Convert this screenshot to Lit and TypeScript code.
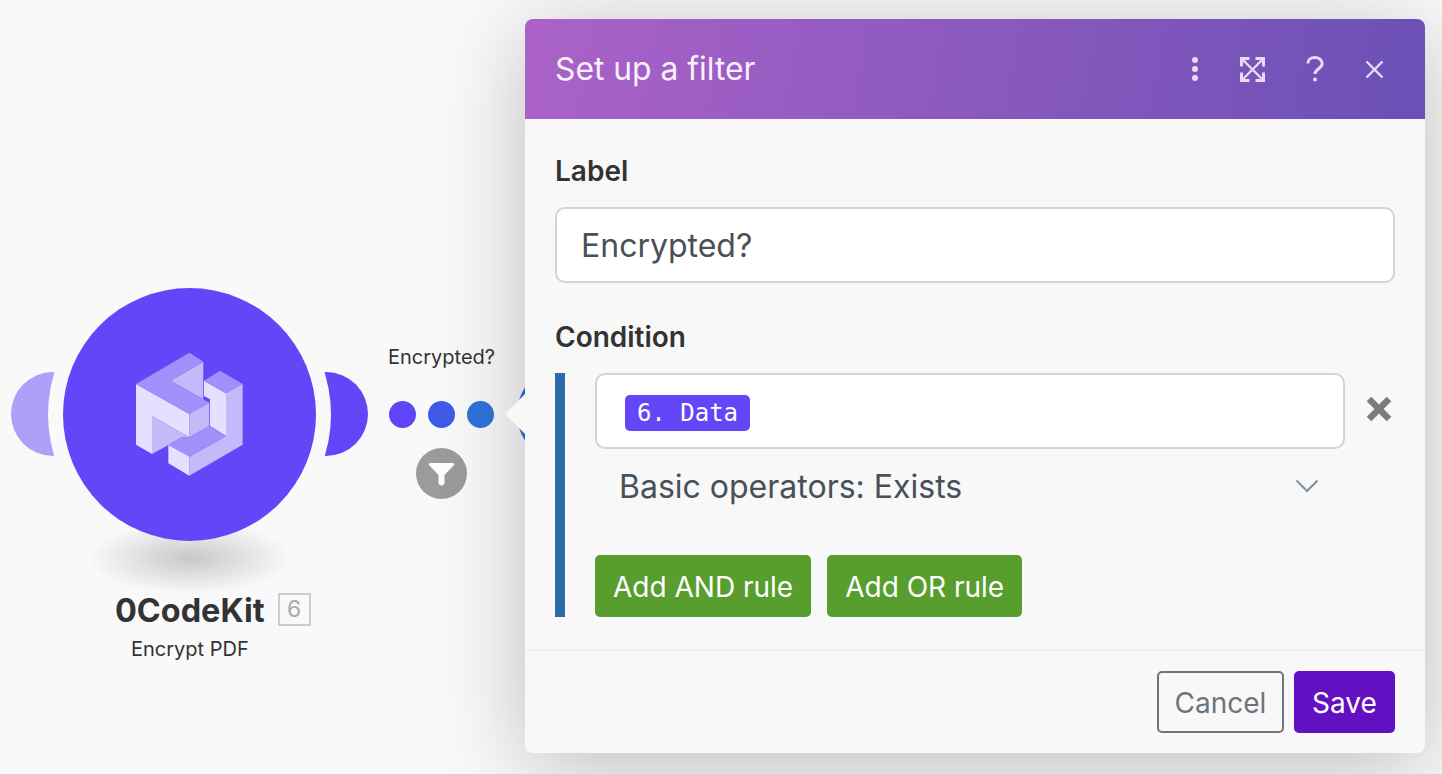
import { LitElement, html, css, svg } from "lit";
import { customElement } from "lit/decorators.js";

const logo = svg`
  <polygon fill="#e4e0ff" points="48,132 208,222 208,292 96,228 96,342 48,314" />
  <polygon fill="#c3baf9" points="96,228 208,292 185,292 145,315 96,342" />
  <polygon fill="#c3baf9" points="152,122 250,65 250,178" />
  <polygon fill="#a091fa" points="48,132 208,38 250,65 152,122 268,188 208,222" />
  <polygon fill="#c3baf9" points="208,222 268,188 268,258 208,292" />
  <polygon fill="#e4e0ff" points="252,122 318,160 318,288 270,258 270,178 252,168" />
  <polygon fill="#a091fa" points="252,122 300,92 368,132 318,160" />
  <polygon fill="#c3baf9" points="318,160 368,132 368,314 208,407 208,350 318,288" />
  <polygon fill="#a091fa" points="145,315 185,292 208,292 268,258 318,288 208,350" />
  <polygon fill="#e4e0ff" points="145,315 208,350 208,407 145,370" />
`;

@customElement("app-root")
export class AppRoot extends LitElement {
  static styles = css`
    :host {
      display: block;
      position: relative;
      width: 1442px;
      height: 774px;
      overflow: hidden;
      background: #f9f9f9;
      font-family: Inter, "Liberation Sans", sans-serif;
      color: #333;
    }

    /* scenario canvas */
    .port {
      position: absolute;
      top: 372px;
      width: 84px;
      height: 84px;
      border-radius: 50%;
    }
    .port.left {
      left: 11px;
      background: #ae9ff8;
    }
    .port.right {
      left: 284px;
      background: #6246f8;
    }
    .ring {
      position: absolute;
      left: 48px;
      top: 273px;
      width: 283px;
      height: 283px;
      border-radius: 50%;
      background: #f9f9f9;
    }
    .node-shadow {
      position: absolute;
      left: 88px;
      top: 522px;
      width: 204px;
      height: 72px;
      background: radial-gradient(closest-side, rgba(0, 0, 0, 0.2), rgba(0, 0, 0, 0.08) 60%, rgba(0, 0, 0, 0));
    }
    .node {
      position: absolute;
      left: 63px;
      top: 288px;
      width: 253px;
      height: 253px;
      border-radius: 50%;
      background: #6246f8;
      display: flex;
      align-items: center;
      justify-content: center;
    }
    .node svg {
      width: 140px;
      height: 150px;
      margin-left: 1px;
    }
    .node-title {
      position: absolute;
      left: 115px;
      top: 591px;
      display: flex;
      align-items: center;
      gap: 13px;
      font-size: 32.4px;
      line-height: 40px;
      font-weight: 700;
    }
    .badge {
      box-sizing: border-box;
      width: 33px;
      height: 33px;
      margin-bottom: 4px;
      border: 2px solid #ccc;
      font-size: 23px;
      line-height: 29px;
      font-weight: 400;
      color: #aaa;
      text-align: center;
    }
    .node-sub {
      position: absolute;
      left: 131px;
      top: 637px;
      font-size: 20px;
      line-height: 24px;
    }
    .filter-label {
      position: absolute;
      left: 388px;
      top: 345px;
      font-size: 20px;
      line-height: 24px;
    }
    .dot {
      position: absolute;
      top: 401px;
      width: 27px;
      height: 27px;
      border-radius: 50%;
    }
    .funnel {
      position: absolute;
      left: 416px;
      top: 448px;
      width: 51px;
      height: 51px;
      border-radius: 50%;
      background: #9b9b9b;
      display: flex;
      align-items: center;
      justify-content: center;
    }
    .next {
      position: absolute;
      left: 517px;
      top: 366px;
      width: 96px;
      height: 96px;
      border-radius: 50%;
      background: #2e73db;
    }
    .pointer {
      position: absolute;
      left: 505px;
      top: 394px;
      width: 20px;
      height: 40px;
      background: #f8f8f8;
      clip-path: polygon(100% 0, 100% 100%, 0 50%);
    }

    /* dialog */
    .dialog {
      position: absolute;
      left: 525px;
      top: 19px;
      width: 900px;
      height: 734px;
      display: flex;
      flex-direction: column;
      background: #f8f8f8;
      border-radius: 8px;
      box-shadow: 0 14px 90px rgba(0, 0, 0, 0.24);
    }
    .head {
      flex: none;
      height: 100px;
      box-sizing: border-box;
      padding: 0 30px;
      display: flex;
      align-items: center;
      border-radius: 8px 8px 0 0;
      background: linear-gradient(100deg, #ab62c8 0%, #6b50b5 100%);
      color: #e6dcf5;
    }
    .head h2 {
      flex: 1;
      margin: 0;
      font-size: 31.8px;
      line-height: 36px;
      font-weight: 400;
      color: #f7f0fb;
    }
    .head-icons {
      display: flex;
      align-items: center;
    }
    .head-icons svg {
      display: block;
    }
    .body {
      flex: 1;
      padding: 37px 30px 32px 30px;
      border-bottom: 2px solid #f0f0f0;
    }
    .field-label {
      font-size: 28px;
      line-height: 30px;
      font-weight: 600;
      margin-bottom: 21px;
    }
    .input {
      box-sizing: border-box;
      height: 76px;
      background: #fff;
      border: 2px solid #d4d4d4;
      border-radius: 10px;
      display: flex;
      align-items: center;
      font-size: 32px;
      color: #495057;
    }
    .label-input {
      padding-left: 24px;
      margin-bottom: 39px;
    }
    .rule {
      border-left: 10px solid #2b69a8;
      padding-left: 30px;
    }
    .rule-row {
      display: flex;
      align-items: center;
    }
    .rule-row .input {
      width: 750px;
      padding-left: 28px;
    }
    .remove {
      margin-left: 21px;
      margin-top: -4px;
      display: block;
    }
    .chip {
      box-sizing: border-box;
      height: 36px;
      width: 125px;
      margin-top: 4px;
      border-radius: 5px;
      background: #6246f8;
      color: #fff;
      font-family: "DejaVu Sans Mono", monospace;
      font-size: 24px;
      line-height: 36px;
      text-align: center;
    }
    .select {
      width: 750px;
      box-sizing: border-box;
      height: 74px;
      padding: 0 26px 0 24px;
      display: flex;
      align-items: center;
      justify-content: space-between;
      font-size: 32px;
      color: #495057;
    }
    .actions {
      display: flex;
      gap: 16px;
      margin-top: 32px;
    }
    .btn {
      box-sizing: border-box;
      height: 62px;
      padding-top: 2px;
      display: flex;
      align-items: center;
      justify-content: center;
      border-radius: 5px;
      font-size: 28px;
    }
    .btn.green {
      background: #589e2e;
      color: #fff;
      padding-left: 18px;
      padding-right: 18px;
    }
    .foot {
      flex: none;
      display: flex;
      justify-content: flex-end;
      gap: 10px;
      padding: 20px 30px;
    }
    .btn.cancel {
      width: 127px;
      border: 2px solid #6c757d;
      color: #6c757d;
    }
    .btn.save {
      width: 101px;
      background: #630fc2;
      color: #fff;
    }
  `;

  render() {
    return html`
      <div class="port left"></div>
      <div class="port right"></div>
      <div class="ring"></div>
      <div class="node-shadow"></div>
      <div class="node">
        <svg viewBox="0 0 420 450">${logo}</svg>
      </div>
      <div class="node-title"><span>0CodeKit</span><span class="badge">6</span></div>
      <div class="node-sub">Encrypt PDF</div>

      <div class="filter-label">Encrypted?</div>
      <div class="dot" style="left:389px;background:#5f45f8"></div>
      <div class="dot" style="left:428px;background:#3f5be8"></div>
      <div class="dot" style="left:467px;background:#2e73db"></div>
      <div class="funnel">
        <svg width="27" height="24" viewBox="0 0 27 24">
          <path
            fill="#fff"
            d="M2.2 1h22.6c1.2 0 1.8 1.3 1 2.2L16.5 13v7.5c0 2-1.4 3-3 3s-3-1-3-3V13L1.2 3.2C.4 2.3 1 1 2.2 1z"
          />
        </svg>
      </div>
      <div class="next"></div>

      <div class="dialog">
        <div class="head">
          <h2>Set up a filter</h2>
          <div class="head-icons">
            <svg width="10" height="26" viewBox="0 0 10 26" style="margin-right:39px" fill="currentColor">
              <circle cx="5" cy="4" r="3" />
              <circle cx="5" cy="13" r="3" />
              <circle cx="5" cy="22" r="3" />
            </svg>
            <svg width="27" height="27" viewBox="0 0 27 27" style="margin-right:40px" fill="none" stroke="currentColor" stroke-width="3">
              <path d="M2.5 10.5v-8h8M16.5 2.5h8v8M24.5 16.5v8h-8M10.5 24.5h-8v-8" />
              <path stroke-width="2.4" d="M3.5 3.5l20 20M23.5 3.5l-20 20" />
            </svg>
            <svg width="18" height="26" viewBox="0 0 18 26" style="margin-right:41px" fill="none" stroke="currentColor" stroke-width="3">
              <path d="M1.8 7.5C1.8 3.8 4.8 1.6 8.8 1.6s7.4 2.4 7.4 6c0 5.2-7.2 5-7.2 10.4" />
              <circle cx="9" cy="23.5" r="2" fill="currentColor" stroke="none" />
            </svg>
            <svg width="19" height="19" viewBox="0 0 19 19" style="margin-right:11px" fill="none" stroke="currentColor" stroke-width="2.4">
              <path d="M1.5 1.5l16 16M17.5 1.5l-16 16" />
            </svg>
          </div>
        </div>
        <div class="body">
          <div class="field-label">Label</div>
          <div class="input label-input">Encrypted?</div>
          <div class="field-label">Condition</div>
          <div class="rule">
            <div class="rule-row">
              <div class="input"><span class="chip">6. Data</span></div>
              <svg class="remove" width="26" height="26" viewBox="0 0 26 26" fill="none" stroke="#7c7c7c" stroke-width="6.5">
                <path d="M3 3l20 20M23 3L3 23" />
              </svg>
            </div>
            <div class="select">
              <span>Basic operators: Exists</span>
              <svg width="24" height="14" viewBox="0 0 24 14" fill="none" stroke="#7d8ea3" stroke-width="2">
                <path d="M1.5 1.5L12 12L22.5 1.5" />
              </svg>
            </div>
            <div class="actions">
              <div class="btn green">Add AND rule</div>
              <div class="btn green">Add OR rule</div>
            </div>
          </div>
        </div>
        <div class="foot">
          <div class="btn cancel">Cancel</div>
          <div class="btn save">Save</div>
        </div>
      </div>
      <div class="pointer"></div>
    `;
  }
}
